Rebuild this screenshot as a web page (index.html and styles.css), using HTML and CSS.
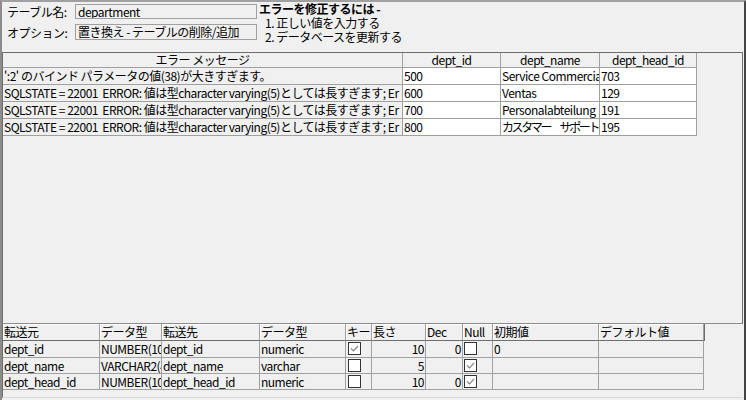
FILE: index.html
```html
<!DOCTYPE html>
<html lang="ja">
<head>
<meta charset="utf-8">
<link rel="stylesheet" href="styles.css">
</head>
<body>
<div class="window">
  <div class="top">
    <div class="fields">
      <span class="label">テーブル名:</span>
      <div class="field">department</div>
      <span class="label">オプション:</span>
      <div class="field field-2">置き換え - テーブルの削除/追加</div>
    </div>
    <div class="help">
      <div class="help-title">エラーを修正するには -</div>
      <div class="help-item">1. 正しい値を入力する</div>
      <div class="help-item">2. データベースを更新する</div>
    </div>
  </div>

  <div class="error-frame">
    <div class="egrid">
      <div class="h">エラー メッセージ</div>
      <div class="h">dept_id</div>
      <div class="h">dept_name</div>
      <div class="h">dept_head_id</div>

      <div>':2' のバインド パラメータの値(38)が大きすぎます。</div>
      <div class="w">500</div>
      <div class="w">Service Commercial</div>
      <div class="w">703</div>

      <div>SQLSTATE = 22001  ERROR: 値は型character varying(5)としては長すぎます; Er</div>
      <div class="w">600</div>
      <div class="w">Ventas</div>
      <div class="w">129</div>

      <div>SQLSTATE = 22001  ERROR: 値は型character varying(5)としては長すぎます; Er</div>
      <div class="w">700</div>
      <div class="w">Personalabteilung</div>
      <div class="w">191</div>

      <div>SQLSTATE = 22001  ERROR: 値は型character varying(5)としては長すぎます; Er</div>
      <div class="w">800</div>
      <div class="w tight">カスタマー　サポート</div>
      <div class="w">195</div>
    </div>
  </div>

  <div class="map-frame">
    <div class="mgrid">
      <div class="mh">転送元</div>
      <div class="mh">データ型</div>
      <div class="mh">転送先</div>
      <div class="mh">データ型</div>
      <div class="mh">キー</div>
      <div class="mh">長さ</div>
      <div class="mh">Dec</div>
      <div class="mh">Null</div>
      <div class="mh">初期値</div>
      <div class="mh mh-last">デフォルト値</div>

      <div>dept_id</div>
      <div>NUMBER(10)</div>
      <div>dept_id</div>
      <div>numeric</div>
      <div class="cb cb-key"><svg width="13" height="13" viewBox="0 0 13 13"><rect x="0.5" y="0.5" width="12" height="12" fill="#fff" stroke="#333"/><path d="M3 6.5 L5.5 9 L10 4" fill="none" stroke="#888" stroke-width="1.2"/></svg></div>
      <div class="num">10</div>
      <div class="num">0</div>
      <div class="cb"><svg width="13" height="13" viewBox="0 0 13 13"><rect x="0.5" y="0.5" width="12" height="12" fill="#fff" stroke="#333"/></svg></div>
      <div>0</div>
      <div></div>

      <div>dept_name</div>
      <div>VARCHAR2(40)</div>
      <div>dept_name</div>
      <div>varchar</div>
      <div class="cb cb-key"><svg width="13" height="13" viewBox="0 0 13 13"><rect x="0.5" y="0.5" width="12" height="12" fill="#fff" stroke="#333"/></svg></div>
      <div class="num">5</div>
      <div class="num"></div>
      <div class="cb"><svg width="13" height="13" viewBox="0 0 13 13"><rect x="0.5" y="0.5" width="12" height="12" fill="#fff" stroke="#333"/><path d="M3 6.5 L5.5 9 L10 4" fill="none" stroke="#888" stroke-width="1.2"/></svg></div>
      <div></div>
      <div></div>

      <div>dept_head_id</div>
      <div>NUMBER(10)</div>
      <div>dept_head_id</div>
      <div>numeric</div>
      <div class="cb cb-key"><svg width="13" height="13" viewBox="0 0 13 13"><rect x="0.5" y="0.5" width="12" height="12" fill="#fff" stroke="#333"/></svg></div>
      <div class="num">10</div>
      <div class="num">0</div>
      <div class="cb"><svg width="13" height="13" viewBox="0 0 13 13"><rect x="0.5" y="0.5" width="12" height="12" fill="#fff" stroke="#333"/><path d="M3 6.5 L5.5 9 L10 4" fill="none" stroke="#888" stroke-width="1.2"/></svg></div>
      <div></div>
      <div></div>
    </div>
  </div>
</div>
</body>
</html>
```

FILE: styles.css
```css
html, body {
  margin: 0;
  padding: 0;
  background: #f0f0f0;
}

body {
  font-family: "Noto Sans CJK JP", "Liberation Sans", sans-serif;
  font-size: 12px;
  letter-spacing: -0.5px;
  color: #000;
}

.window {
  box-sizing: border-box;
  width: 746px;
  height: 400px;
  overflow: hidden;
  background: #f0f0f0;
  border-top: 2px solid #a0a0a0;
  border-left: 2px solid #8c8c8c;
  border-right: 2px solid #444;
}

.top {
  display: flex;
  height: 50px;
}

.fields {
  display: grid;
  grid-template-columns: 68px 182px;
  grid-template-rows: 15px 16px;
  row-gap: 5px;
  padding: 2px 0 0 5px;
  align-items: center;
}

.label {
  line-height: 15px;
}

.field {
  box-sizing: border-box;
  height: 15px;
  border: 1px solid #a0a0a0;
  background: #f0f0f0;
  padding-left: 2px;
  line-height: 13px;
  white-space: nowrap;
  overflow: hidden;
}

.field-2 {
  height: 16px;
  line-height: 14px;
}

.help {
  margin-left: 2px;
  line-height: 14px;
}

.help-title {
  font-weight: bold;
}

.help-item {
  padding-left: 6px;
}

.error-frame {
  box-sizing: border-box;
  width: 741px;
  height: 272px;
  border: 1px solid #6e6e6e;
  border-bottom-color: #8c8c8c;
}

.egrid {
  display: grid;
  grid-template-columns: 400px 98px 99px 97px;
  grid-template-rows: 15px repeat(4, 17px);
  width: 694px;
}

.egrid > div {
  box-sizing: border-box;
  border-right: 1px solid #a0a0a0;
  border-bottom: 1px solid #a0a0a0;
  white-space: pre;
  overflow: hidden;
  padding-left: 1px;
  line-height: 16px;
}

.egrid > .h {
  text-align: center;
  line-height: 14px;
  padding-left: 0;
  overflow: visible;
}

.egrid > .w {
  background: #fff;
}

.egrid > .tight {
  letter-spacing: -2.4px;
}

.map-frame {
  box-sizing: border-box;
  width: 741px;
  height: 74px;
  border-left: 1px solid #6e6e6e;
  border-bottom: 1px solid #d8d8d8;
}

.mgrid {
  display: grid;
  grid-template-columns: 97px 62px 98px 86px 26px 54px 37px 30px 106px 105px;
  grid-template-rows: 17px 17px 16px 16px;
  width: 701px;
}

.mgrid > div {
  box-sizing: border-box;
  border-right: 1px solid #a0a0a0;
  border-bottom: 1px solid #a0a0a0;
  white-space: pre;
  overflow: hidden;
  padding-left: 1px;
  line-height: 15px;
}

.mgrid > .mh {
  border-bottom: 1px solid #6e6e6e;
  box-shadow: inset 1px 1px 0 #fff;
  line-height: 16px;
  padding-left: 1px;
}

.mgrid > .mh-last {
  box-shadow: inset 1px 1px 0 #fff, 1px 0 0 #6e6e6e;
}

.mgrid > .num {
  text-align: right;
  padding-right: 1px;
}

.mgrid > .cb {
  padding-left: 1px;
  padding-top: 1px;
  line-height: 0;
}

.mgrid > .cb-key {
  padding-left: 2px;
}
```
